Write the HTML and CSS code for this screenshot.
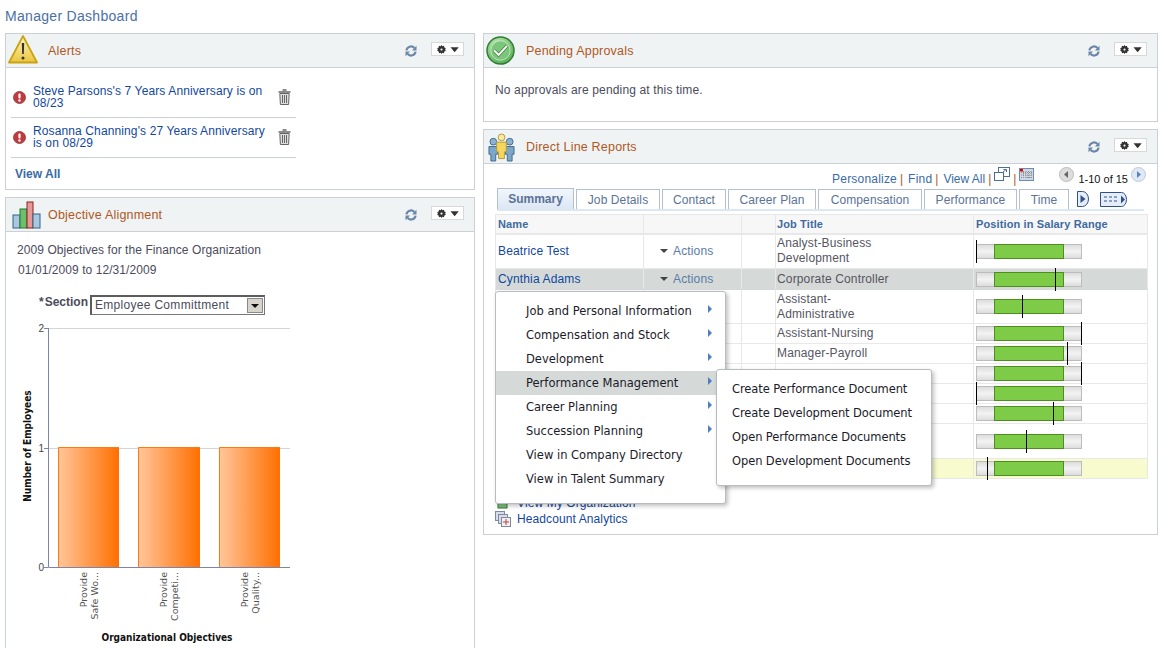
FILE: index.html
```html
<!DOCTYPE html>
<html lang="en">
<head>
<meta charset="utf-8">
<title>Manager Dashboard</title>
<link rel="stylesheet" href="styles.css">
</head>
<body>
<svg class="defs" width="0" height="0" aria-hidden="true">
  <defs>
    <symbol id="refresh" viewBox="0 0 12 12">
      <path d="M1.400 5.400A4.700 4.700 0 0 1 9.400 2.900" fill="none" stroke="#6a86a8" stroke-width="2.200"/>
      <path d="M10.600 6.600A4.700 4.700 0 0 1 2.600 9.100" fill="none" stroke="#6a86a8" stroke-width="2.200"/>
      <path d="M11.500 .8V5.400H7z" fill="#6a86a8"/>
      <path d="M.5 11.200V6.600H5z" fill="#6a86a8"/>
    </symbol>
    <symbol id="trash" viewBox="0 0 13 16">
      <path d="M4.500 1h4M.5 3h12" stroke="#666" stroke-width="1.600" fill="none"/>
      <path d="M1.800 4.500h9.400l-.6 11H2.400z" fill="#dedede" stroke="#666"/>
      <path d="M4.500 6v8M6.500 6v8M8.500 6v8" stroke="#666"/>
    </symbol>
    <symbol id="err" viewBox="0 0 13 13">
      <circle cx="6.500" cy="6.500" r="6" fill="#c0393f" stroke="#a04a4a"/>
      <rect x="5.400" y="2.600" width="2.200" height="5" rx="1" fill="#fff"/>
      <circle cx="6.500" cy="9.500" r="1.200" fill="#fff"/>
    </symbol>
    <symbol id="gear" viewBox="0 0 32 12">
      <path d="M6 0l1.200 1.700 2.100-.6.500 2.100 2 1-1 1.800 1 1.800-2 1-.5 2.100-2.100-.6L6 12l-1.200-1.700-2.100.6-.5-2.100-2-1 1-1.800-1-1.800 2-1 .5-2.100 2.100.6z" fill="#333"/>
      <circle cx="6" cy="6" r="1.500" fill="#eee"/>
      <path d="M18 3h11l-5.500 6.500z" fill="#333"/>
    </symbol>
  </defs>
</svg>

<h1 class="page-title">Manager Dashboard</h1>

<div class="columns">
  <div class="col col-left">
    <section class="panel alerts">
      <header class="panel-head">
        <svg class="head-icon" width="30" height="29" viewBox="0 0 30 29"><defs><linearGradient id="warn" x1="0" x2="0" y1="0" y2="1"><stop offset="0" stop-color="#fdf6c8"/><stop offset="1" stop-color="#ecc53c"/></linearGradient></defs><path d="M15 1 29 27.500H1z" fill="url(#warn)" stroke="#c9a412" stroke-width="1.800" stroke-linejoin="round"/><path d="M13.800 8h2.400l-.4 11h-1.600z" fill="#333"/><circle cx="15" cy="23" r="1.500" fill="#333"/></svg>
        <h2 class="panel-title">Alerts</h2>
        <svg class="refresh"><use href="#refresh"/></svg>
        <button class="gear"><svg width="24" height="9"><use href="#gear"/></svg></button>
      </header>
      <div class="alerts-body">
        <div class="alert">
          <svg class="err"><use href="#err"/></svg>
          <a class="alert-text">Steve Parsons's 7 Years Anniversary is on 08/23</a>
          <svg class="trash"><use href="#trash"/></svg>
        </div>
        <div class="alert">
          <svg class="err"><use href="#err"/></svg>
          <a class="alert-text">Rosanna Channing's 27 Years Anniversary is on 08/29</a>
          <svg class="trash"><use href="#trash"/></svg>
        </div>
        <a class="view-all">View All</a>
      </div>
    </section>

    <section class="panel objective">
      <header class="panel-head">
        <svg class="head-icon" width="30" height="28" viewBox="0 0 30 28"><rect x="1" y="14" width="7" height="13" fill="#a9c8de" stroke="#33628a"/><rect x="8" y="8" width="7" height="19" fill="#6cc06c" stroke="#1f7a2c"/><rect x="15" y="1" width="6" height="26" fill="#e59a98" stroke="#8a2020"/><rect x="21" y="13" width="7" height="14" fill="#a9c8de" stroke="#33628a"/></svg>
        <h2 class="panel-title">Objective Alignment</h2>
        <svg class="refresh"><use href="#refresh"/></svg>
        <button class="gear"><svg width="24" height="9"><use href="#gear"/></svg></button>
      </header>
      <div class="objective-body">
        <p class="obj-line">2009 Objectives for the Finance Organization</p>
        <p class="obj-line obj-dates">01/01/2009 to 12/31/2009</p>
        <div class="section-row">
          <span class="section-label"><span class="req">*</span>Section</span>
          <div class="select"><span class="select-val">Employee Committment</span><span class="select-btn"></span></div>
        </div>
        <svg class="chart" width="290" height="330" viewBox="1 5 290 330">
          <defs>
            <linearGradient id="bar" x1="0" x2="1" y1="0" y2="0"><stop offset="0" stop-color="#ffc79c"/><stop offset="1" stop-color="#ff6f00"/></linearGradient>
          </defs>
          <path d="M43 18.500H285M43 138.500H285" stroke="#d4d4de"/>
          <path d="M43.500 18V257.500H285" fill="none" stroke="#7d84a8"/>
          <path d="M39 18.500h4M39 138.500h4M39 257.500h4" stroke="#7d84a8"/>
          <text class="tick" x="39" y="22" text-anchor="end">2</text>
          <text class="tick" x="39" y="142" text-anchor="end">1</text>
          <text class="tick" x="39" y="261" text-anchor="end">0</text>
          <rect x="53" y="137" width="61" height="120" fill="url(#bar)"/>
          <rect x="133" y="137" width="62" height="120" fill="url(#bar)"/>
          <rect x="214" y="137" width="61" height="120" fill="url(#bar)"/>
          <path d="M53.500 257V137.500H114M133.500 257V137.500H195M214.500 257V137.500H275" fill="none" stroke="#ff7a10"/>
          <text class="axis" transform="translate(26 136) rotate(-90)" text-anchor="middle">Number of Employees</text>
          <g class="cat">
            <text transform="translate(82 262) rotate(-90)" text-anchor="end">Provide</text>
            <text transform="translate(93 262) rotate(-90)" text-anchor="end">Safe Wo...</text>
            <text transform="translate(162 262) rotate(-90)" text-anchor="end">Provide</text>
            <text transform="translate(173 262) rotate(-90)" text-anchor="end">Competi...</text>
            <text transform="translate(243 262) rotate(-90)" text-anchor="end">Provide</text>
            <text transform="translate(254 262) rotate(-90)" text-anchor="end">Quality...</text>
          </g>
          <text class="axis" x="162" y="331" text-anchor="middle">Organizational Objectives</text>
        </svg>
      </div>
    </section>
  </div>

  <div class="col col-right">
    <section class="panel pending">
      <header class="panel-head">
        <svg class="head-icon" width="29" height="29" viewBox="0 0 30 30"><defs><radialGradient id="g" cx=".4" cy=".3" r=".8"><stop offset="0" stop-color="#c8ecc0"/><stop offset="1" stop-color="#4aa84a"/></radialGradient></defs><circle cx="15" cy="15" r="14" fill="url(#g)" stroke="#2f7d32" stroke-width="1.500"/><circle cx="15" cy="15" r="10" fill="#7cc67c" stroke="#d7f0d2" stroke-opacity=".7"/><path d="M8.500 15l4.500 4.500 8.500-9" fill="none" stroke="#3c7d3c" stroke-width="3.400"/><path d="M8.500 15l4.500 4.500 8.500-9" fill="none" stroke="#fff" stroke-width="2"/></svg>
        <h2 class="panel-title">Pending Approvals</h2>
        <svg class="refresh"><use href="#refresh"/></svg>
        <button class="gear"><svg width="24" height="9"><use href="#gear"/></svg></button>
      </header>
      <p class="pending-body">No approvals are pending at this time.</p>
    </section>

    <section class="panel reports">
      <header class="panel-head">
        <svg class="head-icon" width="27" height="29" viewBox="0 0 28 30"><circle cx="5.500" cy="9" r="3.500" fill="#8fb2cf" stroke="#3f6a8f"/><path d="M1 14h9v8H8v7H3v-7H1z" fill="#7ea6c8" stroke="#3f6a8f"/><circle cx="22.500" cy="9" r="3.500" fill="#8fb2cf" stroke="#3f6a8f"/><path d="M18 14h9v8h-2v7h-5v-7h-2z" fill="#7ea6c8" stroke="#3f6a8f"/><circle cx="14" cy="4.500" r="3.500" fill="#fbe9a0" stroke="#b09a3a"/><path d="M9 9.500h10v10h-2v7h-6v-7H9z" fill="#f6d75e" stroke="#b09a3a"/></svg>
        <h2 class="panel-title">Direct Line Reports</h2>
        <svg class="refresh"><use href="#refresh"/></svg>
        <button class="gear"><svg width="24" height="9"><use href="#gear"/></svg></button>
      </header>
      <div class="reports-body">
        <div class="grid-tools">
          <a>Personalize</a><span class="sep">|</span>
          <a>Find</a><span class="sep">|</span>
          <a class="view-link">View All</a><span class="sep sep-tight">|</span>
          <svg class="tool-ico" width="16" height="14" viewBox="0 0 16 14"><rect x="4.500" y=".5" width="11" height="9" fill="#fff" stroke="#4d6f96"/><rect x=".5" y="5.500" width="9" height="8" fill="#fff" stroke="#4d6f96"/><path d="M8 6l4-3.500M9.500 2.500H12.500V5" fill="none" stroke="#4d6f96"/></svg>
          <span class="sep sep-narrow">|</span>
          <svg class="tool-ico" width="15" height="13" viewBox="0 0 15 13"><rect x=".5" y=".5" width="14" height="12" fill="#cfd8e6" stroke="#6d8ab3"/><path d="M2 4.500h11M2 7h11M2 9.500h11M4.500 3v8M7 3v8M9.500 3v8M12 3v8" stroke="#8c8c8c" stroke-dasharray="1 1"/><rect x="1" y="1" width="3" height="2.500" fill="#e00000"/></svg>
          <span class="pager">
            <svg class="pager-btn" width="15" height="15" viewBox="0 0 15 15"><circle cx="7.500" cy="7.500" r="7" fill="#ddd" stroke="#bbb"/><path d="M9 4v7L5 7.500z" fill="#666"/></svg>
            <span class="pager-text">1-10 of 15</span>
            <svg class="pager-btn" width="15" height="15" viewBox="0 0 15 15"><circle cx="7.500" cy="7.500" r="7" fill="#dfe8f4" stroke="#bcc9dc"/><path d="M6 4v7l4-3.500z" fill="#5a86c0"/></svg>
          </span>
        </div>
        <div class="tabs">
          <span class="tab tab-on t1">Summary</span>
          <span class="tab t2">Job Details</span>
          <span class="tab t3">Contact</span>
          <span class="tab t4">Career Plan</span>
          <span class="tab t5">Compensation</span>
          <span class="tab t6">Performance</span>
          <span class="tab t7">Time</span>
          <svg class="tab-next" width="12" height="16" viewBox="0 0 12 16"><path d="M.5.500h5a6 7.500 0 0 1 0 15h-5z" fill="#e4edf8" stroke="#30508a"/><path d="M3.500 4v8l5-4z" fill="#30508a"/></svg>
          <svg class="tab-all" width="28" height="15" viewBox="0 0 28 15"><path d="M.5.500h21a5 7 0 0 1 0 14H.5z" fill="#e4edf8" stroke="#30508a"/><path d="M4 5h3M9 5h3M14 5h3M4 9h3M9 9h3M14 9h3" stroke="#30508a"/><path d="M21 3.500v8l4-4z" fill="#30508a"/></svg>
        </div>
        <div class="tab-rule"></div>
        <table class="grid">
          <colgroup><col class="c1"><col class="c2"><col class="c3"><col class="c4"><col class="c5"></colgroup>
          <thead><tr class="h"><th>Name</th><th></th><th></th><th>Job Title</th><th>Position in Salary Range</th></tr></thead>
          <tbody>
            <tr class="r35"><td><a>Beatrice Test</a></td><td class="act"><span class="tri"></span><a class="actions">Actions</a></td><td></td><td>Analyst-Business<br>Development</td><td><div class="range"><i class="fill"></i><b class="mark" style="left:-1px"></b></div></td></tr>
            <tr class="r21 sel"><td><a>Cynthia Adams</a></td><td class="act"><span class="tri"></span><a class="actions">Actions</a></td><td></td><td>Corporate Controller</td><td><div class="range"><i class="fill"></i><b class="mark" style="left:78px"></b></div></td></tr>
            <tr class="r34"><td></td><td></td><td></td><td>Assistant-<br>Administrative</td><td><div class="range"><i class="fill"></i><b class="mark" style="left:45px"></b></div></td></tr>
            <tr class="r20"><td></td><td></td><td></td><td>Assistant-Nursing</td><td><div class="range"><i class="fill"></i><b class="mark" style="left:104px"></b></div></td></tr>
            <tr class="r20"><td></td><td></td><td></td><td>Manager-Payroll</td><td><div class="range"><i class="fill"></i><b class="mark" style="left:90px"></b></div></td></tr>
            <tr class="r20"><td></td><td></td><td></td><td></td><td><div class="range"><i class="fill"></i><b class="mark" style="left:104px"></b></div></td></tr>
            <tr class="r20"><td></td><td></td><td></td><td></td><td><div class="range"><i class="fill"></i><b class="mark" style="left:-1px"></b></div></td></tr>
            <tr class="r20"><td></td><td></td><td></td><td></td><td><div class="range"><i class="fill"></i><b class="mark" style="left:76px"></b></div></td></tr>
            <tr class="r35"><td></td><td></td><td></td><td></td><td><div class="range"><i class="fill"></i><b class="mark" style="left:49px"></b></div></td></tr>
            <tr class="r20 hl"><td></td><td></td><td></td><td></td><td><div class="range"><i class="fill"></i><b class="mark" style="left:10px"></b></div></td></tr>
          </tbody>
        </table>
        <div class="links">
          <div class="link-row"><svg width="16" height="14" viewBox="0 0 16 14"><rect x="3" y="3" width="9" height="9" fill="#7cc07c" stroke="#2f7d32"/></svg><a>View My Organization</a></div>
          <div class="link-row"><svg width="16" height="16" viewBox="0 0 16 16"><rect x=".5" y=".5" width="9" height="9" fill="#d6deea" stroke="#7a8aa0"/><rect x="3.500" y="3.500" width="9" height="9" fill="#e3d9e6" stroke="#7a8aa0"/><rect x="6.500" y="6.500" width="9" height="9" fill="#eef0f2" stroke="#7a8aa0"/><path d="M11 8v6M8 11h6" stroke="#c04040"/></svg><a>Headcount Analytics</a></div>
        </div>
      </div>

      <nav class="menu menu-main">
        <div class="mi">Job and Personal Information<span class="arr"></span></div>
        <div class="mi">Compensation and Stock<span class="arr"></span></div>
        <div class="mi">Development<span class="arr"></span></div>
        <div class="mi mi-on">Performance Management<span class="arr"></span></div>
        <div class="mi">Career Planning<span class="arr"></span></div>
        <div class="mi">Succession Planning<span class="arr"></span></div>
        <div class="mi">View in Company Directory</div>
        <div class="mi">View in Talent Summary</div>
      </nav>
      <nav class="menu menu-sub">
        <div class="mi">Create Performance Document</div>
        <div class="mi">Create Development Document</div>
        <div class="mi">Open Performance Documents</div>
        <div class="mi">Open Development Documents</div>
      </nav>
    </section>
  </div>
</div>
</body>
</html>
```

FILE: styles.css
```css
* { box-sizing: border-box; }
html, body { margin: 0; padding: 0; }
body {
  width: 1162px;
  height: 648px;
  overflow: hidden;
  background: #fff;
  font-family: "Liberation Sans", Arial, sans-serif;
  font-size: 12px;
  color: #4b4b5c;
}
.defs { position: absolute; }
a { color: #12479e; }

.page-title {
  margin: 0;
  height: 33px;
  padding: 8px 0 0 5px;
  font-size: 14px;
  line-height: 16px;
  font-weight: normal;
  letter-spacing: .3px;
  color: #4a6fa5;
}

.columns { display: flex; gap: 8px; padding-left: 5px; align-items: flex-start; }
.col { display: flex; flex-direction: column; gap: 7px; }
.col-left { width: 470px; }
.col-right { width: 675px; }

.panel { border: 1px solid #cbd0d6; background: #fff; position: relative; }
.panel-head {
  height: 34px;
  background: #f0f3f4;
  border-bottom: 1px solid #cbd0d6;
  display: flex;
  align-items: center;
  padding-right: 10px;
}
.head-icon { flex: none; margin-left: 2px; margin-top: -3px; }
.panel-title { margin: 0 auto 0 0; font-size: 12.500px; font-weight: normal; letter-spacing: .2px; color: #b1581f; }
.alerts .panel-title { padding-left: 10px; }
.refresh { width: 12px; height: 12px; flex: none; margin-right: 14px; }
.gear {
  width: 33px; height: 14px; padding: 0 0 0 5px; margin: -3px 0 0;
  border: 1px solid #d8d8d8; background: #fff;
  display: flex; align-items: center;
}

.alerts-body { height: 121px; padding: 10px 0 0 5px; }
.alert {
  width: 285px;
  height: 40px;
  border-bottom: 1px solid #cbd0d6;
  display: flex;
  align-items: center;
  padding: 0 0 1px 2px;
}
.err { width: 13px; height: 13px; flex: none; margin-right: 7px; }
.alert-text { width: 240px; font-size: 12px; line-height: 12px; letter-spacing: .12px; flex: none; }
.trash { width: 13px; height: 16px; flex: none; margin-left: 5px; }
.view-all { display: block; margin: 9px 0 0 4px; font-weight: bold; color: #3a6ba5; line-height: 14px; }

.objective { height: 451px; border-bottom: 0; }
.objective .head-icon { margin-left: 6px; margin-top: 0; margin-right: 6px; }
.objective-body { padding: 8px 0 0 11px; }
.obj-line { margin: 0; line-height: 20px; letter-spacing: .07px; color: #4b4b5c; }
.obj-dates { padding-left: 1px; }
.section-row { display: flex; margin: 15px 0 0 22px; height: 20px; }
.section-label { font-weight: bold; width: 51px; line-height: 14px; color: #4b4b5c; }
.req { margin-right: 1px; }
.select {
  width: 175px; height: 20px; border: 1px solid #777; border-top: 2px solid #5c5c5c; border-left: 2px solid #5c5c5c;
  background: #fff; display: flex; align-items: center; justify-content: space-between;
  font-size: 12px; padding: 0 1px 2px 3px; letter-spacing: .3px;
}
.select-btn {
  width: 16px; height: 15px; background: #d8d4cc; border: 1px solid #888; position: relative; margin-top: 2px;
}
.select-btn::after {
  content: ""; position: absolute; left: 3px; top: 5px;
  border-left: 4px solid transparent; border-right: 4px solid transparent; border-top: 4px solid #111;
}
.chart { display: block; margin: 0 0 0 -11px; overflow: visible; }
.tick { font-size: 10px; fill: #444; font-family: "Liberation Sans", sans-serif; }
.axis { font-size: 10px; font-weight: bold; fill: #111; font-family: "DejaVu Sans Condensed", "DejaVu Sans", sans-serif; }
.cat text { font-size: 9.500px; fill: #555; font-family: "DejaVu Sans", sans-serif; }

.pending { height: 89px; }
.pending .head-icon { margin-left: 2px; margin-top: 0; margin-right: 11px; }
.pending-body { margin: 0; padding: 15px 0 0 11px; line-height: 14px; letter-spacing: .15px; }

.reports { height: 406px; }
.reports .head-icon { margin-left: 4px; margin-top: 2px; margin-right: 11px; }

.reports-body { padding: 0 10px 0 11px; }
.grid-tools {
  height: 24px;
  display: flex;
  align-items: flex-end;
  justify-content: flex-end;
  padding-right: 1px;
  padding-bottom: 2px;
  line-height: 14px;
}
.grid-tools a { color: #3a6ba5; letter-spacing: .2px; }
.grid-tools .view-link { letter-spacing: 0; }
.sep { color: #b1581f; margin: 0 5px 0 3px; }
.sep-tight { margin-right: 3px; }
.sep-narrow { margin: 0 3px 0 3px; }
.tool-ico { margin-bottom: 5px; }
.pager { display: flex; align-items: flex-end; margin-left: 25px; }
.pager-btn { margin-bottom: 4px; }
.pager-text { color: #111; margin: 0 3px 0 4px; line-height: 13px; font-size: 11px; }

.tabs { display: flex; height: 21px; align-items: flex-end; gap: 2px; }
.tab {
  height: 20px; border: 1px solid #b4bfd0; border-bottom: 0; background: #fff;
  color: #5a7396; text-align: center; line-height: 20px; letter-spacing: .1px; flex: none;
}
.tab-on { background: linear-gradient(#f2f6fb, #dce7f4); font-weight: bold; height: 21px; letter-spacing: 0; }
.t1 { width: 77px; margin-left: 2px; }
.t2 { width: 84px; }
.t3 { width: 64px; }
.t4 { width: 88px; }
.t5 { width: 104px; }
.t6 { width: 93px; }
.t7 { width: 50px; }
.tab-next { margin: 0 0 2px 6px; flex: none; }
.tab-all { margin: 0 0 2px 9px; flex: none; }
.tab-rule { height: 2px; background: #dce7f4; width: 647px; margin-left: 2px; }

.grid { border-collapse: collapse; table-layout: fixed; width: 652px; margin-top: 3px; }
.c1 { width: 148px; } .c2 { width: 98px; } .c3 { width: 34px; } .c4 { width: 198px; } .c5 { width: 174px; }
.grid th, .grid td { border: 1px solid #e8e8e8; padding: 0 0 0 2px; text-align: left; vertical-align: middle; }
.grid th { height: 19px; background: #f7f7f7; color: #3f6a9f; font-size: 11px; font-weight: bold; border-bottom-width: 2px; letter-spacing: .12px; }
.grid td { line-height: 15px; color: #55555f; letter-spacing: .15px; }
.grid th:nth-child(4), .grid td:nth-child(4) { padding-left: 1px; }
.r34 td { height: 34px; }
.r35 td { height: 35px; }
.r21 td { height: 21px; }
.r20 td { height: 20px; }
.sel td { background: #d5dad8; border-top-color: #d5dad8; border-bottom-color: #d5dad8; }
.hl td { background: #f8fbcd; }
.act { padding-left: 16px !important; }
.tri { display: inline-block; border-left: 4px solid transparent; border-right: 4px solid transparent; border-top: 4px solid #444; margin-right: 5px; vertical-align: 2px; }
.actions { color: #5a7ba6; }
.range {
  position: relative; width: 106px; height: 15px; margin-left: 0;
  background: linear-gradient(#ddd, #f3f3f3 50%, #ddd); border: 1px solid #bcbcbc;
}
.fill { position: absolute; left: 17px; top: -1px; width: 70px; height: 15px; background: #7dcb46; border: 1px solid #4d8f1f; }
.mark { position: absolute; top: -5px; width: 1px; height: 23px; background: #000; }

.links { margin-top: 16px; }
.link-row { display: flex; align-items: center; height: 16px; }
.link-row a { margin-left: 6px; line-height: 14px; letter-spacing: .1px; }

.menu {
  position: absolute;
  background: #fff;
  border: 1px solid #b8bcc0;
  border-radius: 3px;
  box-shadow: 2px 2px 4px rgba(0,0,0,.25);
  font-family: "DejaVu Sans", "Open Sans", sans-serif;
  font-size: 11.500px;
  color: #1b1b2a;
}
.menu-main { left: 11px; top: 161px; width: 231px; height: 213px; padding-top: 7px; }
.menu-sub { left: 232px; top: 239px; width: 216px; height: 117px; padding-top: 7px; letter-spacing: -.1px; }
.mi { height: 24px; line-height: 24px; padding-left: 30px; position: relative; white-space: nowrap; }
.menu-sub .mi { padding-left: 15px; }
.mi-on { background: #d5dad8; }
.arr {
  position: absolute; right: 13px; top: 6px;
  border-top: 4px solid transparent; border-bottom: 4px solid transparent; border-left: 4px solid #4f7fc0;
}
```
